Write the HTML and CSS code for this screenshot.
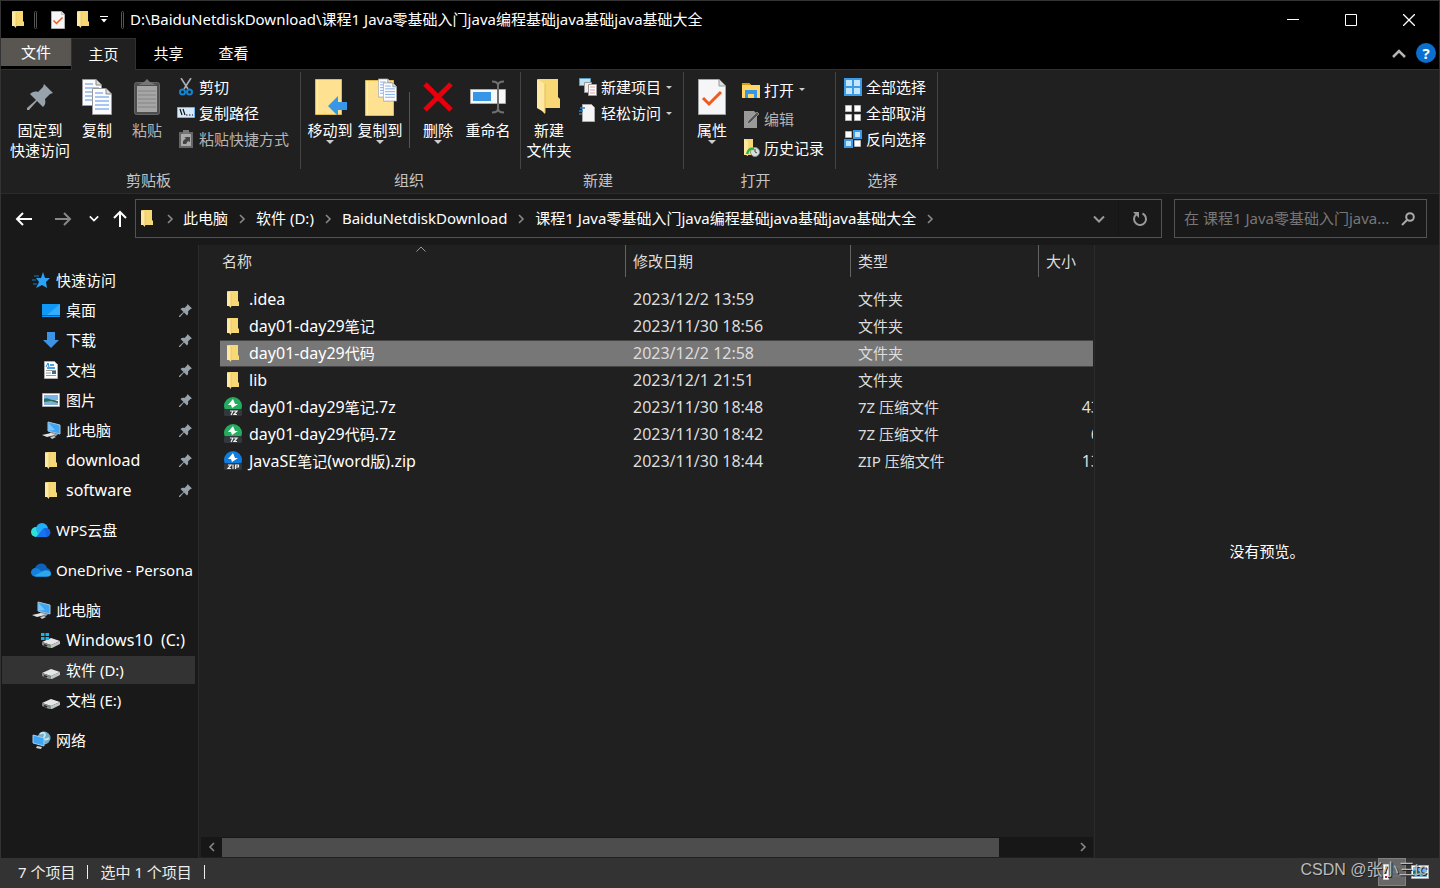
FILE: index.html
```html
<!DOCTYPE html>
<html lang="zh-CN">
<head>
<meta charset="utf-8">
<title>java基础大全</title>
<link rel="stylesheet" href="styles.css">
</head>
<body>
<svg class="defs" aria-hidden="true">
  <symbol id="folder" viewBox="0 0 12 17"><path d="M1 0h10v10l1 1v4H3z" fill="#f8d775"/><path d="M0 0l4 2v15l-2-2H0z" fill="#ffe9a2"/><path d="M4 2v14" stroke="#e5bd58" stroke-width=".6"/></symbol>
  <symbol id="bigfolder" viewBox="0 0 24 36"><path d="M1 0h20v18l2 2v9H5z" fill="#f8d775"/><path d="M0 0l8 5v30l-3-3-5-3z" fill="#ffe9a2"/><path d="M8 5v29" stroke="#e5bd58"/></symbol>
  <symbol id="pin" viewBox="0 0 26 26"><path d="M17 0l9 9-3 1-5 5c1 4 0 6-2 8l-6-6-8 9-2 0 0-2 9-8-6-6c2-2 5-3 8-2l5-5z" fill="#98a2aa"/></symbol>
  <symbol id="page" viewBox="0 0 20 27"><path d="M.5.5H14L19.500 6v20.500H.5z" fill="#fafcff" stroke="#9a9a9a"/><path d="M14 .5V6h5.500" fill="#ddd" stroke="#888"/><path d="M3 5h8M3 9h14M3 13h14M3 17h14M3 21h14" stroke="#5b8fe0"/></symbol>
  <symbol id="check" viewBox="0 0 28 36"><path d="M.5.5H21L27.500 7v28.500H.5z" fill="#f6f6f8" stroke="#a4a4a4"/><path d="M21 .5V7h6.500" fill="#ddd" stroke="#999"/><path d="M5 19l6 6L23 13" fill="none" stroke="#f2591c" stroke-width="3"/></symbol>
  <symbol id="right" viewBox="0 0 8 10"><path d="M2 1l4 4-4 4" fill="none" stroke="currentColor" stroke-width="1.600"/></symbol>
  <symbol id="down" viewBox="0 0 12 8"><path d="M1 1.500l5 5 5-5" fill="none" stroke="currentColor" stroke-width="2"/></symbol>
  <symbol id="arrow" viewBox="0 0 18 14"><path d="M17 7H2M8 1L2 7l6 6" fill="none" stroke="currentColor" stroke-width="2"/></symbol>
  <symbol id="pc" viewBox="0 0 20 18"><path d="M7 1l12 3v9L7 10z" fill="#3fa6f5" stroke="#a9c6d8"/><path d="M7.500 2L14 9 7.500 9.500z" fill="#78c6ff"/><path d="M10 11l7 2-2 2-7-2z" fill="#9ba3aa"/><path d="M1 14l9-2 4 2-8 2z" fill="#dfe3e6"/><path d="M9 16l4-1 2 1-4 2z" fill="#c8cdd0"/></symbol>
  <symbol id="drive" viewBox="0 0 20 12"><path d="M1 6l9-4 9 3-9 4z" fill="#e6e6e8"/><path d="M1 6l9 3v3H8L1 9z" fill="#85898a"/><path d="M10 9l9-4v3l-8 4h-1z" fill="#c2c4c6"/><path d="M3 8l4 1.500v1.500L3 9.500z" fill="#222"/><path d="M6 9.500h1.500V11H6z" fill="#3ae23a"/></symbol>
  <symbol id="picture" viewBox="0 0 18 14"><path d="M.5.5h17v13H.5z" fill="#fff" stroke="#aaa"/><path d="M2 2h14v5H2z" fill="#78b7ea"/><path d="M2 6c3-2 6 1 9 1s3 1 5 1v2H2z" fill="#2f6a5e"/><path d="M2 9l7-1 7 2v2H2z" fill="#7fb0cf"/></symbol>
  <symbol id="z7" viewBox="0 0 20 20"><circle cx="10" cy="9" r="9" fill="#25ad5f"/><path d="M2 12h16l1 2v4l-1 1H2l-1-1v-4z" fill="#33383c"/><path d="M10 2L5 8h3l1 3 6-4h-3z" fill="#fff"/><path d="M7 14h3l-2 4M11 14h3l-3 3.500h3" fill="none" stroke="#eee" stroke-width="1.200"/></symbol>
  <symbol id="zip" viewBox="0 0 20 20"><circle cx="10" cy="9" r="9" fill="#0f7de0"/><path d="M2 12h16l1 2v4l-1 1H2l-1-1v-4z" fill="#33383c"/><path d="M10 2L5 8h3l1 3 6-4h-3z" fill="#fff"/><path d="M5 14h3l-3 3.500h3M10 13.500V18M12.500 18v-4h3v2h-3" fill="none" stroke="#eee" stroke-width="1.200"/></symbol>
</svg>
<div class="window">
  <header class="titlebar">
    <svg class="i-folder"><use href="#folder"/></svg>
    <span class="grip"></span>
    <button class="quick" aria-label="属性"><svg class="i-check"><use href="#check"/></svg></button>
    <button class="quick" aria-label="新建文件夹"><svg class="i-folder"><use href="#folder"/></svg></button>
    <button class="quick narrow" aria-label="自定义"><svg width="8" height="8" viewBox="0 0 8 8"><path d="M0 .5h8" stroke="#fff"/><path d="M1 3h6L4 6.500z" fill="#fff"/></svg></button>
    <span class="grip last"></span>
    <h1 class="title">D:\BaiduNetdiskDownload\课程1 Java零基础入门java编程基础java基础java基础大全</h1>
    <button class="sys" aria-label="最小化"><svg width="12" height="12"><path d="M0 5.500h12" stroke="#fff"/></svg></button>
    <button class="sys" aria-label="最大化"><svg width="12" height="12"><path d="M.5.5h11v11H.5z" fill="none" stroke="#fff"/></svg></button>
    <button class="sys" aria-label="关闭"><svg width="12" height="12"><path d="M0 0l12 12M12 0L0 12" stroke="#fff" stroke-width="1.300"/></svg></button>
  </header>
  <nav class="tabs">
    <button class="tab file">文件</button><button class="tab active">主页</button><button class="tab">共享</button><button class="tab">查看</button>
    <span class="space"></span>
    <button class="fold" aria-label="折叠"><svg width="14" height="9"><path d="M1 8l6-6 6 6" fill="none" stroke="#b4b4b4" stroke-width="2.500"/></svg></button>
    <button class="help" aria-label="帮助">?</button>
  </nav>

  <section class="ribbon">
    <div class="group clip">
      <div class="tools">
        <button class="big wide"><span class="art"><svg width="26" height="26"><use href="#pin"/></svg></span>固定到<br>快速访问</button>
        <button class="big"><span class="art"><svg width="30" height="36"><use href="#page" width="20" height="27"/><use href="#page" x="10" y="9" width="20" height="27"/></svg></span>复制</button>
        <button class="big off"><span class="art"><svg width="26" height="36"><rect x=".5" y="3.500" width="25" height="32" rx="2" fill="#4e4e4e" stroke="#666"/><path d="M3 7h20v26H3z" fill="#a6a6a6"/><path d="M4 12h18M4 16h18M4 20h18M4 24h18M4 28h18" stroke="#848484"/><path d="M4 6l6-3 3-3 3 3 6 3z" fill="#777"/></svg></span>粘贴</button>
        <div class="stack">
          <button class="small"><svg width="18" height="18"><path d="M4 0l7 11M14 0L7 11" stroke="#a9b0b5" stroke-width="1.600"/><circle cx="5.500" cy="14" r="2.500" fill="none" stroke="#1684ce" stroke-width="2"/><circle cx="12.500" cy="14" r="2.500" fill="none" stroke="#1684ce" stroke-width="2"/></svg>剪切</button>
          <button class="small"><svg width="18" height="18"><path d="M.5 3.500h17v10H.5z" fill="#d5ebfb" stroke="#6bb7ef"/><path d="M3 5l2 6M6 5l2 6M9 11h1.500M12 11h1.500M15 11h1" stroke="#111" stroke-width="1.200"/></svg>复制路径</button>
          <button class="small off"><svg width="18" height="18"><path d="M2 2h14v16H2z" fill="#666"/><path d="M4 4h10v12H4z" fill="#aaa"/><path d="M6 0h6v4H6z" fill="#777"/><path d="M6 14v-3l3-3-2-1h6v5l-2-1-2 3z" fill="#444"/></svg>粘贴快捷方式</button>
        </div>
      </div>
      <div class="caption">剪贴板</div>
    </div>
    <div class="group organize">
      <div class="tools">
        <button class="big"><span class="art"><svg width="34" height="36"><path d="M2.500.5h26v35h-26z" fill="#ffe291" stroke="#e4b94c"/><path d="M4.500 1v34" stroke="#fff0bd"/><path d="M15 27l10-10v6h9v8h-9v6z" fill="#3797e6"/></svg></span>移动到<i class="caret"></i></button>
        <button class="big"><span class="art"><svg width="34" height="38"><path d="M2.500 2.500h28v35h-28z" fill="#ffe291" stroke="#e4b94c"/><path d="M4.500 3v34" stroke="#fff0bd"/><use href="#page" x="15" width="14" height="20"/><use href="#page" x="20" y="4" width="14" height="20"/></svg></span>复制到<i class="caret"></i></button>
        <span class="bar"></span>
        <button class="big"><span class="art"><svg width="30" height="32"><path d="M2 3l26 26M28 3L2 29" stroke="#e5000c" stroke-width="5"/></svg></span>删除<i class="caret"></i></button>
        <button class="big"><span class="art"><svg width="36" height="36"><path d="M.5 10.500h35v14H.5z" fill="#f5f7f9" stroke="#aaa"/><path d="M3 13h18v9H3z" fill="#3797e6"/><path d="M22 2.500c4 0 6 1 6 4v23c0 3-2 4-6 4M34 2.500c-4 0-6 1-6 4v23c0 3 2 4 6 4" fill="none" stroke="#6f6f6f" stroke-width="2"/></svg></span>重命名</button>
      </div>
      <div class="caption">组织</div>
    </div>
    <div class="group create">
      <div class="tools">
        <button class="big"><span class="art"><svg width="24" height="36"><use href="#bigfolder"/></svg></span>新建<br>文件夹</button>
        <div class="stack">
          <button class="small"><svg width="18" height="18"><path d="M.5.5h11v7H.5z" fill="#bde2f3" stroke="#5c9dbd"/><path d="M5.500 4.500h7v10h-7z" fill="#eee" stroke="#999"/><path d="M9.500 6.500h8v11h-8z" fill="#fff" stroke="#999"/><path d="M11 9h5M11 12h5M11 15h5" stroke="#e39b9b"/></svg>新建项目<i class="caret"></i></button>
          <button class="small"><svg width="18" height="18"><path d="M3.500.5h9l3 3v14h-12z" fill="#f5f5f5" stroke="#aaa"/><path d="M1 4h5M0 7h4M0 10h3" stroke="#2b7cc0" stroke-width="1.400"/></svg>轻松访问<i class="caret"></i></button>
        </div>
      </div>
      <div class="caption">新建</div>
    </div>
    <div class="group open">
      <div class="tools">
        <button class="big"><span class="art"><svg width="28" height="36"><use href="#check"/></svg></span>属性<i class="caret"></i></button>
        <div class="stack tall">
          <button class="small"><svg width="18" height="18"><path d="M0 2h7l2 2h9v13H0z" fill="#ffd767"/><path d="M0 2h7l2 2H0z" fill="#d99b13"/><path d="M3 9h12v8h-3v-4H6v4H3z" fill="#3797e6"/></svg>打开<i class="caret"></i></button>
          <button class="small off"><svg width="18" height="18"><path d="M2 1h10l3 3v14H2z" fill="#999"/><path d="M5 14l1-3 9-9 2 2-9 9z" fill="#555" stroke="#bbb" stroke-width=".6"/></svg>编辑</button>
          <button class="small"><svg width="18" height="18"><path d="M2 0h9v16H2z" fill="#f8d775"/><path d="M2 0l4 2v15l-4-2z" fill="#ffe9a2"/><circle cx="13" cy="13" r="4.500" fill="#d9dede" stroke="#8a9090"/><path d="M13 10v3l2 1" fill="none" stroke="#444"/><path d="M5 15c1-5 4-6 7-5" fill="none" stroke="#29b83a" stroke-width="2.500"/></svg>历史记录</button>
        </div>
      </div>
      <div class="caption">打开</div>
    </div>
    <div class="group select">
      <div class="tools">
        <div class="stack">
          <button class="small"><svg width="18" height="18"><path d="M0 0h18v18H0z" fill="#3b9be8"/><path d="M2 2h6v6H2zM10 2h6v6h-6zM2 10h6v6H2zM10 10h6v6h-6z" fill="#c3e6ff"/></svg>全部选择</button>
          <button class="small"><svg width="18" height="18"><path d="M1.500 1.500h6v6h-6zM10.500 1.500h6v6h-6zM1.500 10.500h6v6h-6zM10.500 10.500h6v6h-6z" fill="#fff" stroke="#b5b5b5"/></svg>全部取消</button>
          <button class="small"><svg width="18" height="18"><path d="M9 0h9v9H9zM0 9h9v9H0z" fill="#3b9be8"/><path d="M11 2h5v5h-5zM2 11h5v5H2z" fill="#c3e6ff"/><path d="M1.500 1.500h6v6h-6zM10.500 10.500h6v6h-6z" fill="#fff" stroke="#b5b5b5"/></svg>反向选择</button>
        </div>
      </div>
      <div class="caption">选择</div>
    </div>
  </section>

  <section class="navrow">
    <div class="history">
      <button aria-label="后退"><svg width="18" height="14"><use href="#arrow"/></svg></button>
      <button class="dim" aria-label="前进"><svg class="flip" width="18" height="14"><use href="#arrow"/></svg></button>
      <button class="thin recent" aria-label="最近位置"><svg width="10" height="7"><use href="#down"/></svg></button>
      <button class="thin" aria-label="向上"><svg width="14" height="18"><path d="M7 17V2M1 8l6-6 6 6" fill="none" stroke="#fff" stroke-width="2"/></svg></button>
    </div>
    <div class="address">
      <svg class="i-folder"><use href="#folder"/></svg>
      <svg class="sep"><use href="#right"/></svg><a href="#">此电脑</a>
      <svg class="sep"><use href="#right"/></svg><a href="#">软件 (D:)</a>
      <svg class="sep"><use href="#right"/></svg><a href="#">BaiduNetdiskDownload</a>
      <svg class="sep"><use href="#right"/></svg><a href="#">课程1 Java零基础入门java编程基础java基础java基础大全</a>
      <svg class="sep"><use href="#right"/></svg>
      <span class="space"></span>
      <button class="drop" aria-label="以前的位置"><svg width="12" height="8"><use href="#down"/></svg></button>
      <button class="refresh" aria-label="刷新"><svg width="16" height="16"><path d="M10.500 2.500A6 6 0 1 1 4 3.500" fill="none" stroke="#999" stroke-width="2"/><path d="M1 1h6v6z" fill="#999"/></svg></button>
    </div>
    <div class="search">
      <input type="text" aria-label="搜索" placeholder="在 课程1 Java零基础入门java...">
      <svg width="14" height="14"><circle cx="9" cy="5" r="3.800" fill="none" stroke="#aaa" stroke-width="2"/><path d="M6 8l-5 5" stroke="#aaa" stroke-width="2"/></svg>
    </div>
  </section>

  <main class="main">
    <aside class="side">
      <a class="node" href="#"><span class="ico"><svg width="18" height="16"><path d="M11 0l2 6h5l-4 4 1 6-5-3-6 3 3-6-3-4h5z" fill="#2ba2f5"/><path d="M2 4h5M0 8h4M1 12h4" stroke="#1b78c4"/></svg></span>快速访问</a>
      <a class="node sub" href="#"><span class="ico"><svg width="18" height="13"><path d="M0 0h18v13H0z" fill="#1098f7"/><path d="M18 0v11H5z" fill="#34adff"/><path d="M0 11.500h18" stroke="#0762ac"/></svg></span>桌面<svg class="pin"><use href="#pin"/></svg></a>
      <a class="node sub" href="#"><span class="ico"><svg width="16" height="16"><path d="M4 0h8v8h4l-8 8-8-8h4z" fill="#3b95e4"/></svg></span>下载<svg class="pin"><use href="#pin"/></svg></a>
      <a class="node sub" href="#"><span class="ico"><svg width="14" height="18"><path d="M.5.5h10l3 3v14H.5z" fill="#fff" stroke="#aaa"/><path d="M6 4h4M3 7h8" stroke="#1684d8" stroke-width="1.500"/><path d="M2 6l2-4 1 4" fill="none" stroke="#1684d8"/><path d="M2 9.500h10M2 12h5M2 14.500h10" stroke="#999"/><path d="M8 10h4v3H8z" fill="#3e6a8c"/></svg></span>文档<svg class="pin"><use href="#pin"/></svg></a>
      <a class="node sub" href="#"><span class="ico"><svg width="18" height="14"><use href="#picture"/></svg></span>图片<svg class="pin"><use href="#pin"/></svg></a>
      <a class="node sub" href="#"><span class="ico"><svg width="20" height="18"><use href="#pc"/></svg></span>此电脑<svg class="pin"><use href="#pin"/></svg></a>
      <a class="node sub" href="#"><span class="ico"><svg class="i-folder"><use href="#folder"/></svg></span><span class="lat">download</span><svg class="pin"><use href="#pin"/></svg></a>
      <a class="node sub" href="#"><span class="ico"><svg class="i-folder"><use href="#folder"/></svg></span><span class="lat">software</span><svg class="pin"><use href="#pin"/></svg></a>
      <a class="node apart" href="#"><span class="ico"><svg width="20" height="15"><circle cx="5" cy="9" r="5" fill="#2fe0d5"/><circle cx="11" cy="6" r="6" fill="#1fb0f5"/><circle cx="15" cy="9.500" r="4.500" fill="#1464e8"/><path d="M5 14L13 5l3 9z" fill="#1773ee"/></svg></span>WPS云盘</a>
      <a class="node apart" href="#"><span class="ico"><svg width="20" height="14"><path d="M4 5c2-6 11-6 12 0 5 1 5 8 0 8.500H5C-1 13-1 6 4 5z" fill="#0d62bb"/><path d="M0 9c1-4 5-5 8-3l8 7.500H5C2 13.500 0 12 0 9z" fill="#1580dc"/><path d="M3 13l9-5c4-2 8 0 8 3 0 2-2 2.500-4 2.500H5z" fill="#2ba7f0"/></svg></span>OneDrive - Persona</a>
      <a class="node apart" href="#"><span class="ico"><svg width="20" height="18"><use href="#pc"/></svg></span>此电脑</a>
      <a class="node sub" href="#"><span class="ico"><svg width="20" height="16"><use href="#drive" y="4" width="20" height="12"/><path d="M0 1h3.500v3H0zM4.500 1H8v3H4.500zM0 5h3.500v3H0zM4.500 5H8v3H4.500z" fill="#12b5ef"/></svg></span><span class="lat">Windows10&nbsp; (C:)</span></a>
      <a class="node sub current" href="#"><span class="ico low"><svg width="20" height="12"><use href="#drive"/></svg></span>软件 (D:)</a>
      <a class="node sub" href="#"><span class="ico low"><svg width="20" height="12"><use href="#drive"/></svg></span>文档 (E:)</a>
      <a class="node apart" href="#"><span class="ico"><svg width="19" height="18"><circle cx="12" cy="7" r="6.500" fill="#6faecb"/><path d="M8 3c4-3 6 0 4 3s3 3 5 1" fill="none" stroke="#c5e3ef" stroke-width="2"/><path d="M1 4l11 3v8L1 12z" fill="#3fa6f5" stroke="#9ecdf0"/><path d="M5 15l5 1-1 2-5-1z" fill="#cfd4d8"/></svg></span>网络</a>
    </aside>

    <section class="files">
      <div class="listing">
        <svg class="sort" width="10" height="6"><path d="M.5 5.500L5 1l4.500 4.500" fill="none" stroke="#999"/></svg>
        <table class="table">
          <colgroup><col><col class="c-date"><col class="c-type"><col class="c-size"></colgroup>
          <thead><tr><th><div class="head first">名称</div></th><th><div class="head">修改日期</div></th><th><div class="head">类型</div></th><th><div class="head">大小</div></th></tr></thead>
          <tbody>
            <tr><td><span class="name"><span class="fi"><svg class="i-folder"><use href="#folder"/></svg></span><span class="lat">.idea</span></span></td><td class="date">2023/12/2 13:59</td><td>文件夹</td><td></td></tr>
            <tr><td><span class="name"><span class="fi"><svg class="i-folder"><use href="#folder"/></svg></span><span class="lat">day01-day29</span>笔记</span></td><td class="date">2023/11/30 18:56</td><td>文件夹</td><td></td></tr>
            <tr class="chosen"><td><span class="name"><span class="fi"><svg class="i-folder"><use href="#folder"/></svg></span><span class="lat">day01-day29</span>代码</span></td><td class="date">2023/12/2 12:58</td><td>文件夹</td><td></td></tr>
            <tr><td><span class="name"><span class="fi"><svg class="i-folder"><use href="#folder"/></svg></span><span class="lat">lib</span></span></td><td class="date">2023/12/1 21:51</td><td>文件夹</td><td></td></tr>
            <tr><td><span class="name"><span class="fi"><svg class="i-zip"><use href="#z7"/></svg></span><span class="lat">day01-day29</span>笔记<span class="lat">.7z</span></span></td><td class="date">2023/11/30 18:48</td><td>7Z 压缩文件</td><td class="size">43</td></tr>
            <tr><td><span class="name"><span class="fi"><svg class="i-zip"><use href="#z7"/></svg></span><span class="lat">day01-day29</span>代码<span class="lat">.7z</span></span></td><td class="date">2023/11/30 18:42</td><td>7Z 压缩文件</td><td class="size">6</td></tr>
            <tr><td><span class="name"><span class="fi"><svg class="i-zip"><use href="#zip"/></svg></span><span class="lat">JavaSE</span>笔记<span class="lat">(word</span>版<span class="lat">).zip</span></span></td><td class="date">2023/11/30 18:44</td><td>ZIP 压缩文件</td><td class="size">13</td></tr>
          </tbody>
        </table>
      </div>
      <div class="scroll">
        <button aria-label="向左"><svg class="flip" width="8" height="12" viewBox="0 0 8 10"><use href="#right"/></svg></button>
        <div class="track"><div class="thumb"></div></div>
        <button aria-label="向右"><svg width="8" height="12" viewBox="0 0 8 10"><use href="#right"/></svg></button>
      </div>
    </section>
    <section class="preview">没有预览。</section>
  </main>

  <footer class="status">
    <span>7 个项目</span><span class="tick"></span><span>选中 1 个项目</span><span class="tick"></span>
    <span class="space"></span>
    <button class="view on" aria-label="详细信息"><svg width="18" height="16"><path d="M.5.5h5v15h-5z" fill="#fff" stroke="#ccc"/><path d="M2 3h2M2 6h2M2 9h2" stroke="#444"/><path d="M2 12h2v2H2z" fill="#b22"/><path d="M8 3h9M8 8h9M8 12h9" stroke="#777"/></svg></button>
    <button class="view" aria-label="大图标"><svg width="18" height="14"><use href="#picture"/></svg></button>
    <span class="mark">CSDN @张小三tc</span>
  </footer>
</div>
</body>
</html>
```
FILE: styles.css
```css
* { box-sizing: border-box; }
body {
  margin: 0;
  background: #191919;
  color: #fff;
  font: 15px/20px "Noto Sans", "Noto Sans CJK SC", sans-serif;
}
button, input { font: inherit; color: inherit; background: none; border: 0; padding: 0; margin: 0; }
a { color: inherit; text-decoration: none; }
svg { display: block; flex: none; }
.defs { position: absolute; width: 0; height: 0; }
.space { flex: 1; }
.lat { font-size: 16px; }
.flip { transform: scaleX(-1); }
.i-folder { width: 12px; height: 17px; }
.i-check { width: 14px; height: 18px; }
.i-zip { width: 20px; height: 20px; }

.window {
  height: 100vh;
  min-height: 640px;
  display: flex;
  flex-direction: column;
  border: 1px solid #333;
  overflow: hidden;
}

/* title bar */
.titlebar { display: flex; align-items: center; height: 37px; padding: 0 1px 0 11px; background: #000; flex: none; }
.grip { width: 3px; height: 18px; margin: 0 8px 0 10px; border: 1px solid #555; border-radius: 2px; }
.grip.last { margin: 0 6px 0 8px; }
.quick { width: 25px; display: flex; justify-content: center; }
.quick.narrow { width: 18px; }
.title { flex: 1; margin: 0; padding-bottom: 2px; font-size: 15px; font-weight: 400; white-space: nowrap; overflow: hidden; text-overflow: ellipsis; }
.sys { width: 58px; height: 36px; display: flex; align-items: center; justify-content: center; }

/* tabs */
.tabs { display: flex; height: 32px; background: #000; border-bottom: 1px solid #303030; flex: none; padding-right: 3px; }
.tab { width: 65px; height: 32px; padding-bottom: 2px; }
.tab.file { width: 70px; height: 28px; padding: 0; background: #595652; }
.tab.active { background: #202020; border: 1px solid #303030; border-bottom: 0; }
.fold { width: 24px; display: flex; align-items: center; justify-content: center; }
.help { width: 20px; height: 20px; margin: 5px 0 0 5px; border-radius: 10px; background: #0b6fd0; font-weight: 700; }

/* ribbon */
.ribbon { display: flex; background: #202020; border-bottom: 1px solid #2b2b2b; height: 124px; flex: none; }
.group { display: flex; flex-direction: column; background: linear-gradient(#444, #444) right 2px / 1px 97px no-repeat; }
.group.clip { padding: 2px 12px 0 7px; }
.group.organize { padding: 2px 8px 0 4px; }
.group.create { padding: 2px 12px 0 3px; }
.group.open { padding: 2px 12px 0 3px; }
.group.select { padding: 2px 12px 0 3px; }
.tools { display: flex; height: 98px; }
.caption { text-align: center; color: #c4c4c4; }
.big { width: 50px; display: flex; flex-direction: column; align-items: center; text-align: center; white-space: nowrap; }
.big.wide { width: 64px; }
.art { height: 48px; display: flex; align-items: center; justify-content: center; padding-top: 2px; flex: none; }
.off { color: #b5b5b5; }
.caret { border: 4px solid transparent; border-top-color: #ccc; border-bottom: 0; width: 0; height: 0; }
.bar { width: 1px; height: 56px; margin: 20px 3px 0 4px; background: #555; }
.stack { display: flex; flex-direction: column; padding: 2px 0 0 5px; }
.small { display: flex; align-items: center; gap: 4px; height: 26px; white-space: nowrap; }
.small .caret { margin-left: 1px; border-width: 3px; border-bottom-width: 0; }
.tall .small { height: 29px; }
.tall { padding-top: 3px; }

/* navigation row */
.navrow { display: flex; align-items: center; height: 51px; padding: 0 12px 2px 14px; flex: none; background: #191919; }
.history { display: flex; align-items: center; width: 120px; }
.history button { width: 39px; display: flex; justify-content: flex-start; }
.history .thin { width: 22px; }
.history .recent { margin-left: -4px; width: 24px; }
.history .dim { color: #888; }
.address { flex: 1; display: flex; align-items: center; height: 39px; border: 1px solid #535353; padding-left: 5px; min-width: 0; }
.address a { white-space: nowrap; padding-bottom: 2px; }
.sep { width: 8px; height: 10px; margin: 0 10px; color: #888; }
.address .i-folder + .sep { margin: 0 9px 0 13px; }
.drop { width: 39px; color: #999; display: flex; justify-content: center; }
.refresh { width: 43px; height: 37px; border-left: 1px solid #151515; display: flex; align-items: center; justify-content: center; }
.search { width: 253px; height: 39px; margin-left: 12px; border: 1px solid #535353; display: flex; align-items: center; padding: 0 11px 0 9px; }
.search input { flex: 1; min-width: 0; outline: 0; padding-bottom: 2px; }
.search input::placeholder { color: #777; opacity: 1; }

/* content */
.main { flex: 1; display: flex; min-height: 0; }
.side { width: 198px; flex: none; padding: 20px 3px 0 1px; border-right: 1px solid #2b2b2b; background: #191919; overflow: hidden; }
.node { display: flex; align-items: center; height: 30px; padding-left: 28px; gap: 4px; white-space: nowrap; }
.node.sub { padding-left: 38px; }
.node.apart { margin-top: 10px; }
.node.current { height: 28px; margin: 1px 0; background: #333; }
.ico { width: 22px; flex: none; display: flex; justify-content: center; }
.ico.low { padding-top: 5px; }
.pin { width: 13px; height: 13px; margin: 0 3px 0 auto; }

.files { flex: 1; min-width: 0; display: flex; flex-direction: column; background: #202020; padding: 0 1px 1px 2px; }
.listing { flex: 1; min-height: 0; overflow: hidden; position: relative; padding-left: 19px; }
.sort { position: absolute; left: 215px; top: 1px; }
.table { width: calc(100% + 7px); table-layout: fixed; border-collapse: collapse; }
.c-date { width: 225px; }
.c-type { width: 188px; }
.c-size { width: 62px; }
th { padding: 0 0 9px; font-weight: 400; text-align: left; color: #ddd; }
.head { height: 32px; line-height: 32px; padding-left: 7px; border-left: 1px solid #636363; }
.head.first { padding-left: 2px; border: 0; }
td { height: 27px; padding: 0 0 1px 8px; color: #ddd; white-space: nowrap; }
td:first-child { padding-left: 3px; color: #fff; }
td.size { text-align: right; padding: 0 0 1px; font-size: 16px; }
.date { font-size: 16px; }
.name { display: flex; align-items: center; }
.fi { width: 20px; margin-right: 6px; display: flex; justify-content: center; }
.chosen td { background: #777; box-shadow: inset 0 1px #444, inset 0 -1px #444; }

.scroll { display: flex; height: 20px; background: #171717; flex: none; color: #888; }
.scroll button { width: 21px; display: flex; align-items: center; justify-content: center; }
.track { flex: 1; }
.thumb { width: 91.4%; height: 19px; margin-top: 1px; background: #4d4d4d; }

.preview { width: 345px; flex: none; padding-bottom: 2px; border-left: 1px solid #2b2b2b; background: #202020; display: flex; align-items: center; justify-content: center; }

/* status bar */
.status { display: flex; align-items: center; height: 29px; padding: 0 5px 1px 17px; background: #333; color: #eee; flex: none; position: relative; }
.tick { width: 1px; height: 14px; margin: 0 12px; background: #eee; }
.view { width: 28px; height: 28px; display: flex; align-items: center; justify-content: center; }
.view.on { background: #686868; border: 1px solid #828282; }
.mark { position: absolute; right: 12px; top: 2px; color: #bbb; font: 16px/20px "Liberation Sans", "Noto Sans CJK SC", sans-serif; text-shadow: 1px 1px #222; white-space: nowrap; }
```
